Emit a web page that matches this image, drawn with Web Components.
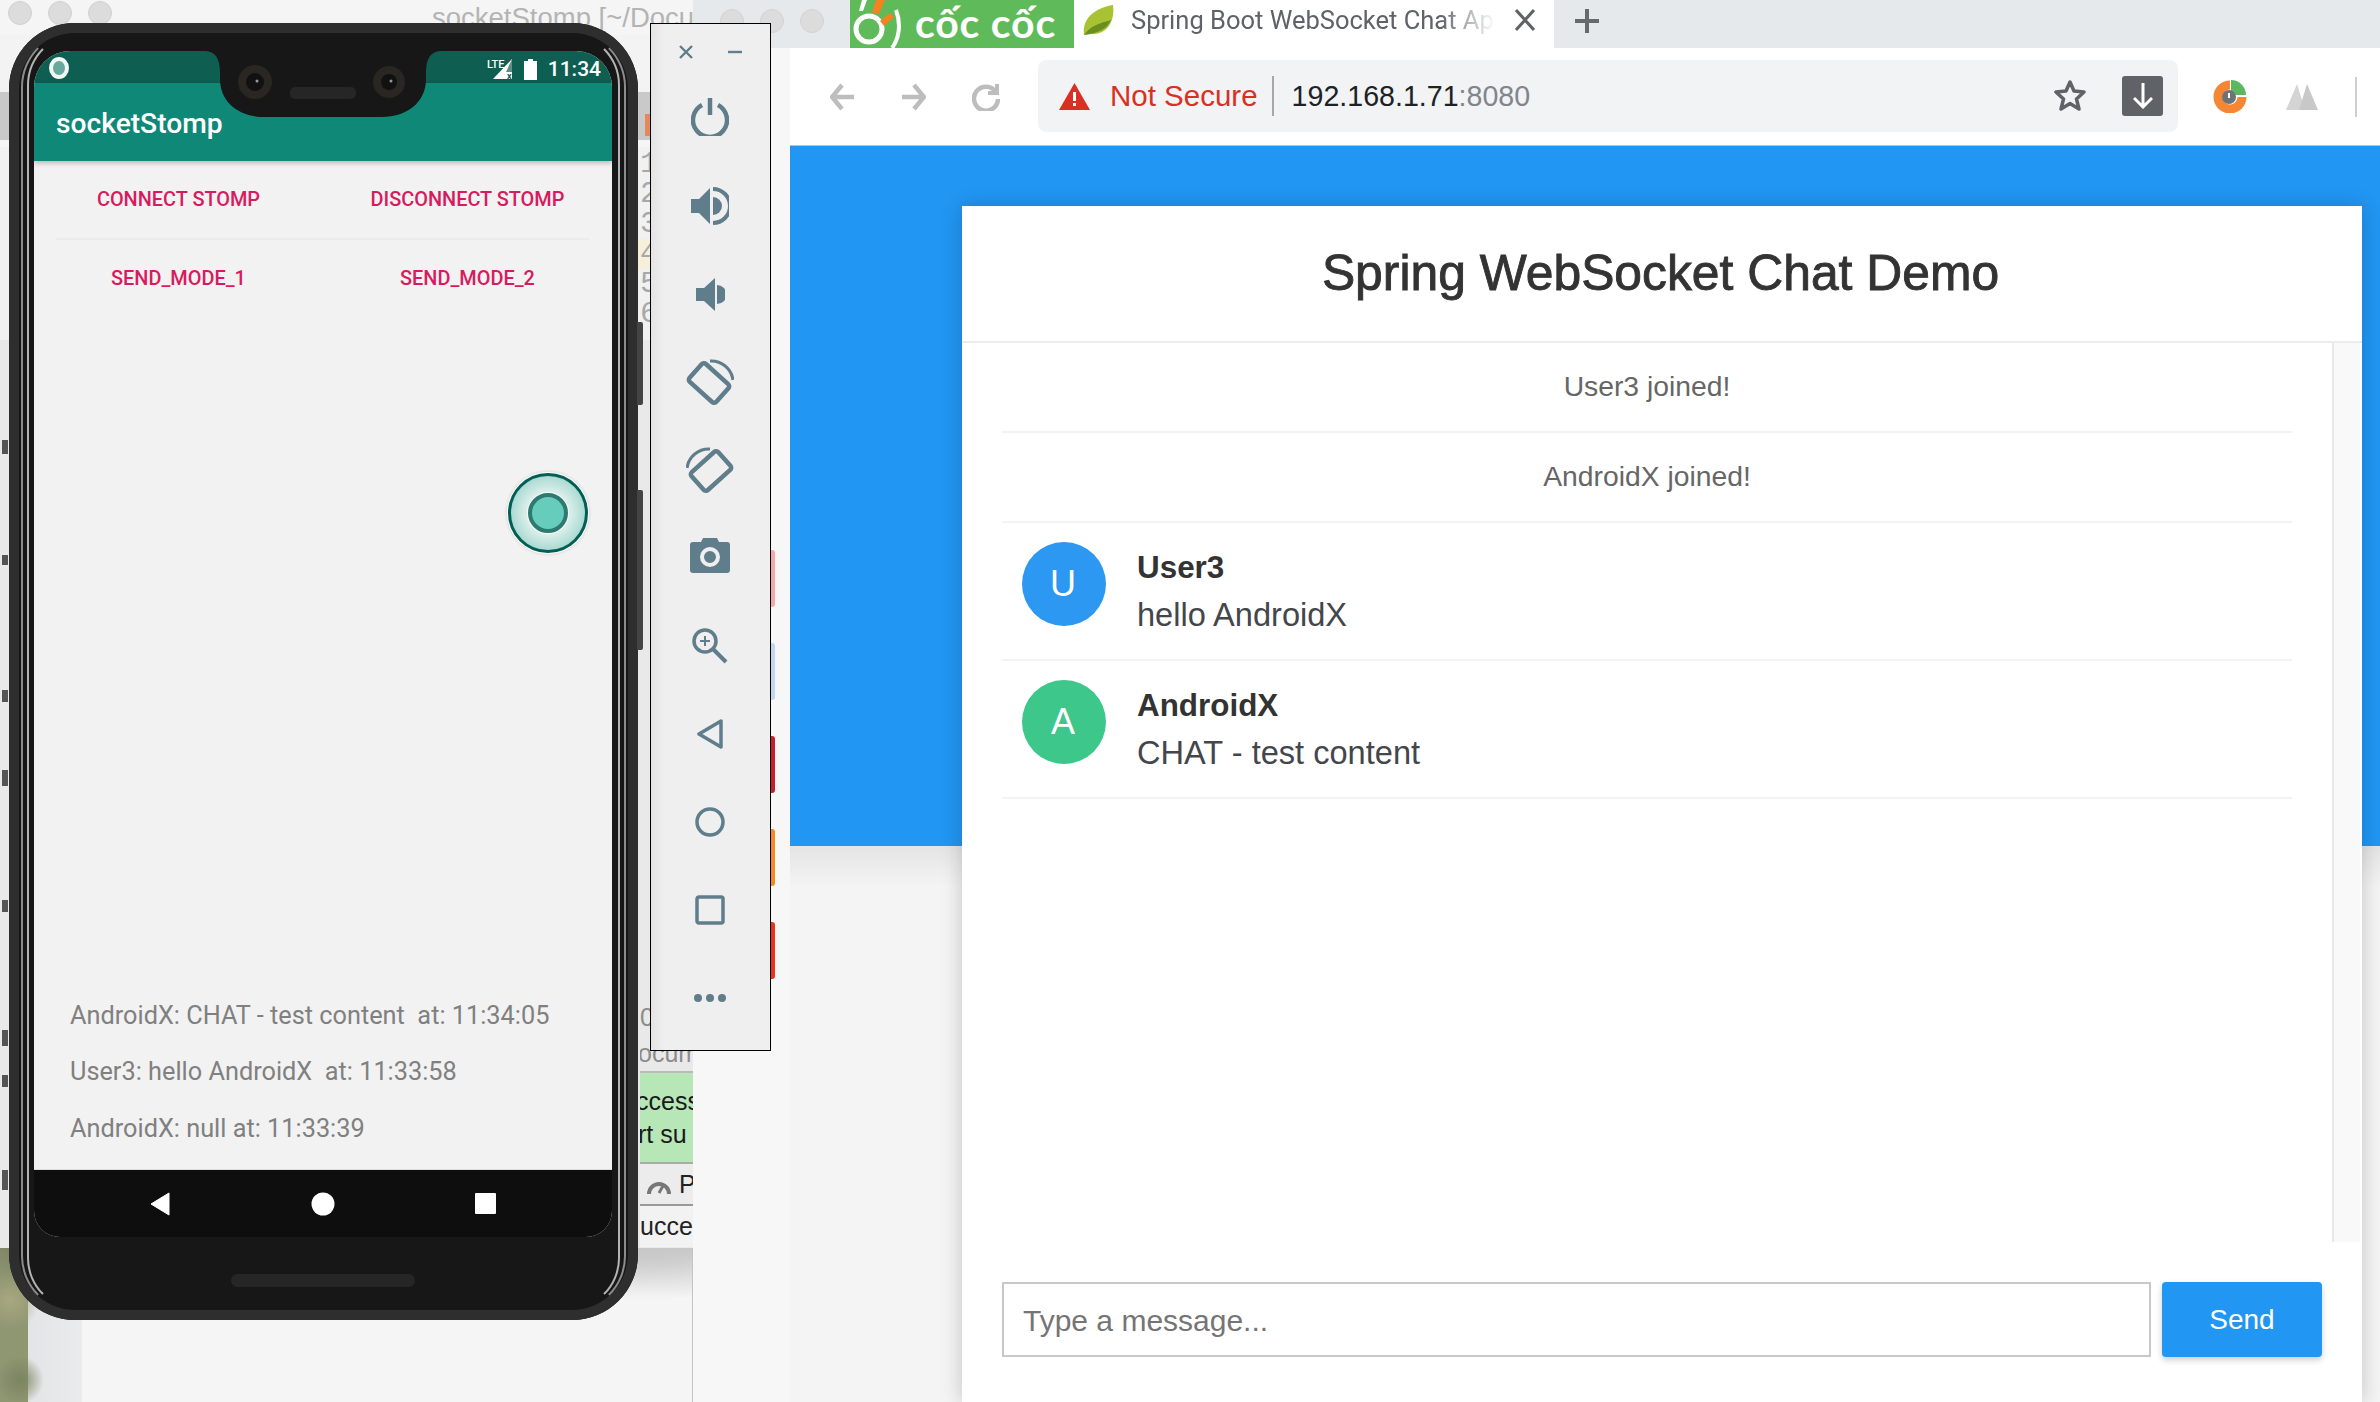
<!DOCTYPE html>
<html>
<head>
<meta charset="utf-8">
<title>Spring Boot WebSocket Chat</title>
<style>
  html, body { margin: 0; padding: 0; }
  body { position: relative; width: 2380px; height: 1402px; overflow: hidden; background: #8d9470; font-family: "Liberation Sans", Arial, sans-serif; }
  desktop-backdrop { position: absolute; left: 0; top: 0; }
  browser-window { position: absolute; left: 693px; top: 0; }
  phone-frame { position: absolute; left: 9px; top: 23px; }
  emulator-toolbar { position: absolute; left: 650px; top: 23px; }
</style>
</head>
<body>
<desktop-backdrop></desktop-backdrop>
<browser-window>
  <chat-card>
    <chat-event>User3 joined!</chat-event>
    <chat-event>AndroidX joined!</chat-event>
    <chat-message name="User3" color="#2d98f2">hello AndroidX</chat-message>
    <chat-message name="AndroidX" color="#3dc78b">CHAT - test content</chat-message>
  </chat-card>
</browser-window>
<phone-frame>
  <stomp-log slot="log">AndroidX: CHAT - test content  at: 11:34:05</stomp-log>
  <stomp-log slot="log">User3: hello AndroidX  at: 11:33:58</stomp-log>
  <stomp-log slot="log">AndroidX: null at: 11:33:39</stomp-log>
</phone-frame>
<emulator-toolbar></emulator-toolbar>

<script>
'use strict';

class ShadowPart extends HTMLElement {
  constructor() {
    super();
    this.attachShadow({mode: 'open'}).innerHTML = this.constructor.markup;
  }
}

class DesktopBackdrop extends ShadowPart {
  static get markup() {
    return `<style>
      :host { display: block; width: 693px; height: 1402px; overflow: hidden; position: relative; background: radial-gradient(circle at 10px 1300px, #a8a880, transparent 30px), radial-gradient(circle at 20px 1380px, #7a8560, transparent 24px), linear-gradient(90deg, #8f9672 0 28px, #e2e4e6 28px, #e9ebed 82px, #f5f5f5 82px); }
      .ide { width: 693px; height: 1248px; display: flex; flex-direction: column; background: #ececec; box-shadow: 0 6px 40px rgba(0,0,0,.28); }
      .title { height: 35px; flex: none; background: #f5f5f5; display: flex; align-items: center; padding-left: 8px; box-sizing: border-box; overflow: hidden; }
      .light { width: 24px; height: 24px; border-radius: 50%; background: #dcdcdc; border: 1px solid #d0d0d0; box-sizing: border-box; margin-right: 16px; flex: none; margin-top: -9px; }
      .title span { color: #b4b4b4; font-size: 27.5px; margin-left: 304px; white-space: nowrap; }
      .tools { height: 57px; flex: none; background: #f3f3f3; }
      .gray { height: 48px; flex: none; background: #c9c9c9; position: relative; }
      .tick { position: absolute; left: 645px; top: 22px; width: 7px; height: 22px; background: #e6885c; }
      .gap { height: 7px; flex: none; background: #f6f6f6; }
      .gutter { flex: none; height: 193px; padding-left: 640px; background: #f1f1f1; font: 30px/30px "Liberation Mono", monospace; color: #a8a8a8; padding-top: 2px; box-sizing: border-box; }
      .gutter div { height: 30px; }
      .gutter .hi { background: #f6efd9; margin-left: -5px; padding-left: 5px; }
      .side { flex: 1; background: #e9e9e9; position: relative; }
      .mark { position: absolute; left: 2px; width: 6px; background: #555; }
      .lines { position: absolute; left: 640px; top: 659px; width: 53px; font: 25px/36px "Liberation Sans", sans-serif; color: #8c8c8c; white-space: nowrap; overflow: hidden; }
      .lines p { margin: 0; height: 36px; }
      .ok { background: #b7e6b7; color: #1a1a1a; height: 93px; line-height: 33px; padding-top: 12px; box-sizing: border-box; border-top: 2px solid #bbb; border-bottom: 2px solid #aaa; }
      .perf { height: 42px; color: #222; background: #ececec; border-bottom: 2px solid #999; line-height: 40px; box-sizing: border-box; }
      .done { background: #f2f2f2; color: #222; line-height: 41px; height: 41px; }
      .edge { position: absolute; left: 692px; top: 1248px; width: 1px; height: 154px; background: #c4c4c4; }
      .lower { position: absolute; left: 28px; top: 1248px; width: 664px; height: 50px; background: linear-gradient(#c8c8c8, rgba(200,200,200,0)); }
    </style>
    <div class="ide">
      <div class="title"><i class="light"></i><i class="light"></i><i class="light"></i><span>socketStomp [~/Docu</span></div>
      <div class="tools"></div>
      <div class="gray"><i class="tick"></i></div>
      <div class="gap"></div>
      <div class="gutter"><div>1</div><div>2</div><div>3</div><div class="hi">4</div><div>5</div><div>6</div></div>
      <div class="side">
        <i class="mark" style="top:100px;height:14px"></i>
        <i class="mark" style="top:215px;height:10px"></i>
        <i class="mark" style="top:350px;height:12px"></i>
        <i class="mark" style="top:430px;height:16px"></i>
        <i class="mark" style="top:560px;height:12px"></i>
        <i class="mark" style="top:690px;height:16px"></i>
        <i class="mark" style="top:735px;height:12px"></i>
        <i class="mark" style="top:830px;height:20px"></i>
        <div class="lines">
          <p>0-</p>
          <p style="margin-left:-2px;">ocum</p>
          <div class="ok"><div style="margin-left:-4px">ccess</div><div style="margin-left:-2px">rt su</div></div>
          <div class="perf"><svg width="26" height="20" viewBox="0 0 26 20" style="margin-left:6px;vertical-align:-2px"><path d="M3 19a10 10 0 1 1 20 0" fill="none" stroke="#777" stroke-width="4"/><path d="M13 18l5-9" stroke="#777" stroke-width="3"/></svg> P</div>
          <div class="done">ucces</div>
        </div>
      </div>
    </div>
    <div class="lower"></div>
    <div class="edge"></div>`;
  }
}

class PhoneFrame extends ShadowPart {
  static get markup() {
    return `<style>
      :host { display: flex; flex-direction: column; width: 629px; height: 1297px; box-sizing: border-box; padding: 28px 26px 83px 25px; background: #171717; border-radius: 66px; position: relative; box-shadow: inset 0 0 0 10px #2e2e2e; font-family: Roboto, sans-serif; }
      .ring { position: absolute; inset: 8px 12px; border: 2px solid; border-color: transparent #8c8c8c; border-radius: 56px; pointer-events: none; }
      .ring.in { inset: 10px 18px; border-color: transparent #b4b4b4; border-radius: 52px; }
      .btn { position: absolute; right: -5px; width: 6px; background: #444; border-radius: 0 2px 2px 0; }
      .screen { flex: 1; display: flex; flex-direction: column; position: relative; overflow: hidden; border-radius: 36px 36px 26px 26px; background: #f2f2f2; }
      .status { height: 32px; flex: none; background: #0f5e52; display: flex; align-items: center; padding: 0 11px 0 15px; color: #fff; }
      .dot { width: 20px; height: 22px; border-radius: 50%; border: 4px solid #f2f7f6; background: #68a89d; box-sizing: border-box; margin-top: 1px; }
      .right { margin-left: auto; display: flex; align-items: center; gap: 10px; margin-top: 3px; }
      .clock { font-size: 21px; font-weight: 500; }
      .bar { height: 78px; flex: none; background: #0f8878; color: #fff; font-size: 28.2px; font-weight: 500; display: flex; align-items: center; padding-left: 22px; box-shadow: 0 2px 5px rgba(0,0,0,.25); position: relative; box-sizing: border-box; padding-top: 2px; }
      .row { display: grid; grid-template-columns: 1fr 1fr; height: 77px; flex: none; align-items: center; text-align: center; color: #d81b60; font-size: 19.9px; font-weight: 500; }
      .rule { height: 2px; flex: none; margin: 0 23px 0 22px; background: #ebebeb; }
      .log { margin-top: auto; padding: 0 0 12px 36px; }
      .nav { height: 68px; flex: none; background: #0e0e0e; display: flex; align-items: center; margin-top: 0; position: relative; border-top: 1px solid #ddd; box-sizing: border-box; }
      .nav svg { position: absolute; top: 22px; }
      .notch { position: absolute; left: 170px; top: 0; }
      .fab { position: absolute; left: 470px; top: 418px; }
      .homebar { position: absolute; left: 222px; bottom: 33px; width: 184px; height: 13px; border-radius: 7px; background: #262626; }
    </style>
    <i class="btn" style="top:299px;height:83px"></i>
    <i class="btn" style="top:467px;height:160px"></i>
    <div class="screen">
      <div class="status">
        <i class="dot"></i>
        <div class="right">
          <svg width="26" height="22" viewBox="0 0 26 22"><path d="M25 1V21H6z" fill="#fff"/><path d="M25 1V14h-6z" fill="#5d8f87"/><text x="0" y="10" font-family="Roboto" font-size="11" font-weight="500" fill="#fff">LTE</text><text x="20" y="21" font-family="Roboto" font-size="9" font-weight="700" fill="#0f5e52">x</text></svg>
          <svg width="15" height="22" viewBox="0 0 15 22"><path d="M1 3h4V1h5v2h4v19H1z" fill="#fff"/></svg>
          <span class="clock">11:34</span>
        </div>
      </div>
      <div class="bar">socketStomp</div>
      <div class="row"><span>CONNECT STOMP</span><span>DISCONNECT STOMP</span></div>
      <div class="rule"></div>
      <div class="row"><span>SEND_MODE_1</span><span>SEND_MODE_2</span></div>
      <div class="log"><slot name="log"></slot></div>
      <div class="nav">
        <svg style="left:115px" width="22" height="24" viewBox="0 0 22 24"><path d="M20 1L2 12l18 11z" fill="#fff" stroke="#fff" stroke-linejoin="round" stroke-width="1"/></svg>
        <svg style="left:277px" width="24" height="24" viewBox="0 0 24 24"><circle cx="12" cy="12" r="11.5" fill="#fff"/></svg>
        <svg style="left:441px" width="22" height="24" viewBox="0 0 22 24"><rect x="0" y="1" width="21" height="21" rx="1" fill="#fff"/></svg>
      </div>
      <svg class="notch" width="238" height="66" viewBox="0 0 238 66">
        <path d="M0 0C12 0 16 8 16 22V28C16 52 36 66 60 66H178C202 66 222 52 222 28V22C222 8 226 0 238 0Z" fill="#171717"/>
        <circle cx="51" cy="31" r="17" fill="#2a2622"/><circle cx="51" cy="31" r="9" fill="#111"/><circle cx="53" cy="30" r="1.5" fill="#999"/>
        <circle cx="185" cy="31" r="16" fill="#2a2622"/><circle cx="185" cy="31" r="8" fill="#111"/><circle cx="187" cy="30" r="1.5" fill="#999"/>
        <rect x="86" y="36" width="66" height="12" rx="5" fill="#262626"/>
      </svg>
      <svg class="fab" width="88" height="88" viewBox="0 0 88 88">
        <defs>
          <radialGradient id="halo"><stop offset=".55" stop-color="#dcefeb"/><stop offset="1" stop-color="#a6d8d0"/></radialGradient>
          <radialGradient id="drop"><stop offset=".8" stop-color="#000" stop-opacity=".18"/><stop offset="1" stop-color="#000" stop-opacity="0"/></radialGradient>
        </defs>
        <circle cx="44" cy="44" r="44" fill="url(#drop)"/>
        <circle cx="44" cy="44" r="41" fill="#fff"/>
        <circle cx="44" cy="44" r="38.5" fill="url(#halo)" stroke="#015f55" stroke-width="3"/>
        <circle cx="44" cy="44" r="21" fill="#fff" fill-opacity=".8"/>
        <circle cx="44" cy="44" r="18" fill="#66ccbb" stroke="#2e7a70" stroke-width="4"/>
      </svg>
    </div>
    <i class="ring"></i><i class="ring in"></i>
    <i class="homebar"></i>`;
  }
}

class StompLog extends ShadowPart {
  static get markup() {
    return `<style>
      :host { display: block; height: 56.5px; line-height: 56.5px; font-size: 25.3px; color: #808080; white-space: pre; font-family: Roboto, sans-serif; }
    </style><slot></slot>`;
  }
}

class EmulatorToolbar extends ShadowPart {
  static get markup() {
    return `<style>
      :host { display: flex; flex-direction: column; width: 121px; height: 1028px; box-sizing: border-box; border: 1.5px solid #000; background: linear-gradient(90deg, #e4e4e4, #efefef 14px); }
      .head { height: 50px; flex: none; display: flex; justify-content: space-between; padding: 21px 28px 0 28px; box-sizing: border-box; }
      .cell { height: 88px; flex: none; display: flex; align-items: center; justify-content: center; padding-right: 1px; }
      svg { display: block; fill: none; stroke: #607d8b; }
      .solid { fill: #607d8b; stroke: none; }
    </style>
    <div class="head">
      <svg width="14" height="14" viewBox="0 0 14 14" stroke-width="2.4"><path d="M1 1l12 12M13 1L1 13"/></svg>
      <svg width="14" height="14" viewBox="0 0 14 14" stroke-width="2.4"><path d="M0 7h14"/></svg>
    </div>
    <div class="cell"><svg style="margin-top:-3px" width="38" height="38" viewBox="0 0 38 38" stroke-width="4.5"><path d="M11 7A17 17 0 1 0 27 7"/><path d="M19 0v17"/></svg></div>
    <div class="cell"><svg width="38" height="38" viewBox="0 0 38 38"><path class="solid" d="M0 12h8L19 1v36L8 26H0z"/><path class="solid" d="M22 10a9 9 0 0 1 0 18z"/><path d="M22 2a17 17 0 0 1 0 34" stroke-width="4"/></svg></div>
    <div class="cell"><svg width="29" height="33" viewBox="0 0 29 33"><path class="solid" d="M0 10h8L19 0v33L8 23H0z"/><path class="solid" d="M21 7a9.5 9.5 0 0 1 0 19z"/></svg></div>
    <div class="cell"><svg width="48" height="48" viewBox="0 0 48 48"><rect x="5" y="13" width="36" height="24" rx="3" stroke-width="4.5" transform="rotate(42 23 25)"/><path d="M24 3A22 22 0 0 1 47 22" stroke-width="3"/></svg></div>
    <div class="cell"><svg width="48" height="48" viewBox="0 0 48 48"><rect x="7" y="13" width="36" height="24" rx="3" stroke-width="4.5" transform="rotate(-42 25 25)"/><path d="M24 3A22 22 0 0 0 1 22" stroke-width="3"/></svg></div>
    <div class="cell"><svg style="margin-top:-5px" width="40" height="35" viewBox="0 0 40 35"><path class="solid" d="M3 4h8l2-4h14l2 4h8a3 3 0 0 1 3 3v25a3 3 0 0 1-3 3H3a3 3 0 0 1-3-3V7a3 3 0 0 1 3-3z"/><circle cx="20" cy="19" r="8" stroke="#efefef" stroke-width="4"/></svg></div>
    <div class="cell"><svg width="36" height="36" viewBox="0 0 36 36" stroke-width="3.5"><circle cx="13" cy="13" r="11"/><path d="M21 21l13 13" stroke-width="4"/><path d="M8 13h10M13 8v10" stroke-width="2"/></svg></div>
    <div class="cell"><svg width="26" height="30" viewBox="0 0 26 30" stroke-width="3.5" stroke-linejoin="round"><path d="M2 15L24 2v26z"/></svg></div>
    <div class="cell"><svg width="30" height="30" viewBox="0 0 30 30" stroke-width="3.5"><circle cx="15" cy="15" r="13"/></svg></div>
    <div class="cell"><svg width="30" height="30" viewBox="0 0 30 30" stroke-width="3.5"><rect x="2" y="2" width="26" height="26" rx="2"/></svg></div>
    <div class="cell"><svg width="32" height="8" viewBox="0 0 32 8"><circle class="solid" cx="4" cy="4" r="4"/><circle class="solid" cx="16" cy="4" r="4"/><circle class="solid" cx="28" cy="4" r="4"/></svg></div>`;
  }
}

class BrowserWindow extends ShadowPart {
  static get markup() {
    return `<style>
      :host { display: flex; flex-direction: column; width: 1687px; height: 1402px; background: #f7f7f7; font-family: Roboto, sans-serif; }
      .tabs { height: 48px; flex: none; background: #e6e9ec; display: flex; align-items: center; overflow: hidden; }
      .light { width: 24px; height: 24px; border-radius: 50%; background: #dcdcdc; border: 1px solid #d2d2d2; box-sizing: border-box; flex: none; margin-right: 16px; }
      .lights { display: flex; padding-left: 27px; margin-top: -7px; width: 157px; box-sizing: border-box; flex: none; }
      .brand { width: 224px; height: 48px; flex: none; background: #5fbb5a; position: relative; display: flex; align-items: center; color: #fff; font: 700 41px Lato, sans-serif; overflow: hidden; }
      .brand svg { flex: none; }
      .brand span { margin-left: 3px; white-space: nowrap; margin-top: -4px; letter-spacing: .8px; }
      .tab { width: 480px; height: 48px; flex: none; background: #fff; display: flex; align-items: center; padding: 0 0 8px 9px; box-sizing: border-box; }
      .tab .name { margin-left: 16px; width: 364px; font-size: 25.5px; color: #5f6368; white-space: nowrap; overflow: hidden; -webkit-mask-image: linear-gradient(90deg, #000 85%, transparent); mask-image: linear-gradient(90deg, #000 85%, transparent); }
      .tab svg.x { margin-left: 20px; }
      .plus { margin-left: 21px; margin-top: -7px; }
      .body { flex: 1; display: flex; min-height: 0; }
      aside { width: 97px; flex: none; display: flex; flex-direction: column; padding: 502px 0 0 78px; box-sizing: border-box; }
      aside i { display: block; width: 4px; height: 57px; margin-bottom: 36px; border-radius: 0 3px 3px 0; }
      .main { flex: 1; display: flex; flex-direction: column; min-width: 0; }
      .bar { height: 98px; flex: none; background: #fff; border-bottom: 1px solid #a9c4de; box-sizing: border-box; display: flex; align-items: center; padding-left: 40px; }
      .nav { stroke: #bdbdbd; fill: none; stroke-width: 4.5; flex: none; }
      .omni { width: 1140px; height: 72px; flex: none; margin-left: 38px; background: #f1f3f4; border-radius: 8px; display: flex; align-items: center; padding-left: 21px; box-sizing: border-box; position: relative; margin-top: -1px; }
      .omni .warn { color: #d93025; font: 29.5px "Liberation Sans", sans-serif; margin-left: 20px; white-space: nowrap; }
      .omni .sep { width: 2px; height: 40px; background: #a8a8a8; margin: 0 18px 0 14px; flex: none; }
      .omni .url { font: 28.6px "Liberation Sans", sans-serif; color: #202124; white-space: nowrap; }
      .omni .url span { color: #80868b; }
      .star { position: absolute; left: 1016px; top: 19px; }
      .dl { position: absolute; left: 1084px; top: 16px; width: 41px; height: 40px; background: #5f6368; border-radius: 3px; display: flex; align-items: center; justify-content: center; }
      .page { flex: 1; min-height: 0; background: linear-gradient(#2196f3 0 700px, #e4e4e4 700px, #f4f4f4 740px); padding: 60px 18px 0 172px; display: flex; }
    </style>
    <div class="tabs">
      <div class="lights"><i class="light"></i><i class="light"></i><i class="light"></i></div>
      <div class="brand">
        <svg width="62" height="48" viewBox="0 0 62 48">
          <circle cx="19" cy="29" r="13" fill="none" stroke="#fff" stroke-width="5"/>
          <path d="M46 10C52 26 48 40 42 48" fill="none" stroke="#fff" stroke-width="4"/>
          <path d="M9 11L12 0h5l-4 11z" fill="#fff"/>
          <path d="M22 13L26 0h9l-6 14z" fill="#f58220"/>
          <path d="M30 21l10-8 4 4-10 9z" fill="#f58220"/>
        </svg>
        <span>cốc cốc</span>
      </div>
      <div class="tab">
        <svg width="32" height="32" viewBox="0 0 32 32"><path d="M1 31C-1 14 12 4 30 1c2 14-4 28-19 29-4 0-7 0-10 1z" fill="#a8c232"/><path d="M1 31c6-9 16-12 27-15-4 10-14 13-27 15z" fill="#6b8f1f"/></svg>
        <span class="name">Spring Boot WebSocket Chat Ap</span>
        <svg class="x" width="20" height="22" viewBox="0 0 20 22" stroke="#5f6368" stroke-width="3" fill="none"><path d="M1 1l18 20M19 1L1 21"/></svg>
      </div>
      <svg class="plus" width="24" height="24" viewBox="0 0 24 24" stroke="#666a6e" stroke-width="4"><path d="M12 0v24M0 12h24"/></svg>
    </div>
    <div class="body">
      <aside>
        <i style="background:#f5a8a8"></i>
        <i style="background:#c4d5ef"></i>
        <i style="background:#c81e2c"></i>
        <i style="background:#f58a1f"></i>
        <i style="background:#e8321e"></i>
      </aside>
      <div class="main">
        <div class="bar">
          <svg class="nav" width="24" height="28" viewBox="0 0 24 28"><path d="M12 2L2 14l10 12M3 14h21"/></svg>
          <svg class="nav" style="margin-left:48px" width="24" height="28" viewBox="0 0 24 28"><path d="M12 2l10 12-10 12M21 14H0"/></svg>
          <svg class="nav" style="margin-left:46px" width="28" height="28" viewBox="0 0 28 28"><path d="M24 9A12 12 0 1 0 26 16"/><path d="M25 1v9h-9" stroke-width="4"/></svg>
          <div class="omni">
            <svg width="31" height="27" viewBox="0 0 31 27"><path d="M15.5 0L31 27H0z" fill="#d93025"/><path d="M14 9h3v9h-3zM14 20h3v3h-3z" fill="#fff"/></svg>
            <span class="warn">Not Secure</span>
            <i class="sep"></i>
            <span class="url">192.168.1.71<span>:8080</span></span>
            <svg class="star" width="32" height="32" viewBox="0 0 32 32"><path d="M16 3l4 9 10 1-7.500 7 2.500 10-9-5.500L7 30l2.500-10L2 13l10-1z" fill="none" stroke="#5f6368" stroke-width="3.500" stroke-linejoin="round"/></svg>
            <div class="dl"><svg width="20" height="26" viewBox="0 0 20 26" fill="none" stroke="#fff" stroke-width="3"><path d="M10 0v24M1 15l9 9 9-9"/></svg></div>
          </div>
          <svg style="margin-left:35px;flex:none" width="34" height="33" viewBox="0 0 34 33"><path d="M17 5A12 12 0 1 0 29 17" fill="none" stroke="#f58633" stroke-width="9"/><path d="M18 0A15 15 0 0 1 33 15H18z" fill="#5cb860"/><circle cx="16" cy="17" r="7" fill="#6e7377"/><path d="M16 13v5" stroke="#fff" stroke-width="2"/></svg>
          <svg style="margin-left:39px;flex:none" width="32" height="28" viewBox="0 0 32 28"><path d="M0 27L11 1l8 26z" fill="#d4d4d4"/><path d="M13 27L21 1l11 26z" fill="#c8c8c8"/></svg>
          <i style="width:2px;height:40px;background:#cfcfcf;margin-left:37px;flex:none"></i>
        </div>
        <div class="page"><slot></slot></div>
      </div>
    </div>`;
  }
}

class ChatCard extends ShadowPart {
  static get markup() {
    return `<style>
      :host { display: flex; flex-direction: column; flex: 1; background: #fff; box-shadow: 0 1px 20px rgba(0,0,0,.2); font-family: "Liberation Sans", Arial, sans-serif; min-width: 0; }
      header { height: 137px; flex: none; border-bottom: 2px solid #ececec; box-sizing: border-box; display: flex; align-items: center; justify-content: center; color: #333; font-size: 49.8px; -webkit-text-stroke: .9px #333; padding-bottom: 2px; padding-right: 3px; }
      .middle { flex: 1; min-height: 0; display: flex; }
      .list { flex: 1; padding: 0 40px; min-width: 0; }
      .track { width: 28px; flex: none; margin-right: 2px; background: #f9f9f9; border-left: 2px solid #e8e8e8; box-sizing: border-box; }
      form { height: 160px; flex: none; display: flex; gap: 11px; padding: 40px 40px 45px 40px; box-sizing: border-box; margin: 0; }
      .input { flex: 1; border: 2px solid #c8c8c8; box-sizing: border-box; display: flex; align-items: center; padding: 3px 0 0 19px; color: #757575; font-size: 30px; }
      .send { width: 160px; flex: none; background: #2196f3; color: #fff; border-radius: 4px; display: flex; align-items: center; justify-content: center; font-size: 28px; box-shadow: 0 3px 6px rgba(0,0,0,.2); }
    </style>
    <header>Spring WebSocket Chat Demo</header>
    <div class="middle">
      <div class="list"><slot></slot></div>
      <div class="track"></div>
    </div>
    <form>
      <div class="input">Type a message...</div>
      <div class="send">Send</div>
    </form>`;
  }
}

class ChatEvent extends ShadowPart {
  static get markup() {
    return `<style>
      :host { display: flex; align-items: center; justify-content: center; height: 90px; box-sizing: border-box; border-bottom: 2px solid #f3f3f3; color: #666; font-size: 28.3px; padding-bottom: 2px; }
    </style><slot></slot>`;
  }
}

class ChatMessage extends ShadowPart {
  static get markup() {
    return `<style>
      :host { display: flex; height: 138px; box-sizing: border-box; border-bottom: 2px solid #f3f3f3; padding: 19px 0 0 20px; }
      .avatar { width: 84px; height: 84px; border-radius: 50%; flex: none; color: #fff; font-size: 36px; display: flex; align-items: center; justify-content: center; padding-right: 2px; box-sizing: border-box; }
      .copy { margin-left: 31px; padding-top: 1px; }
      .name { font-size: 31.4px; line-height: 48px; font-weight: 700; color: #333; padding-top: 1px; margin-bottom: -1px; }
      .text { font-size: 32.6px; line-height: 48px; color: #43464b; }
    </style>
    <div class="avatar"></div>
    <div class="copy"><div class="name"></div><div class="text"><slot></slot></div></div>`;
  }
  connectedCallback() {
    let name = this.getAttribute('name');
    let avatar = this.shadowRoot.querySelector('.avatar');
    avatar.textContent = name.charAt(0);
    avatar.style.background = this.getAttribute('color');
    this.shadowRoot.querySelector('.name').textContent = name;
  }
}

customElements.define('desktop-backdrop', DesktopBackdrop);
customElements.define('phone-frame', PhoneFrame);
customElements.define('stomp-log', StompLog);
customElements.define('emulator-toolbar', EmulatorToolbar);
customElements.define('browser-window', BrowserWindow);
customElements.define('chat-card', ChatCard);
customElements.define('chat-event', ChatEvent);
customElements.define('chat-message', ChatMessage);
</script>
</body>
</html>
